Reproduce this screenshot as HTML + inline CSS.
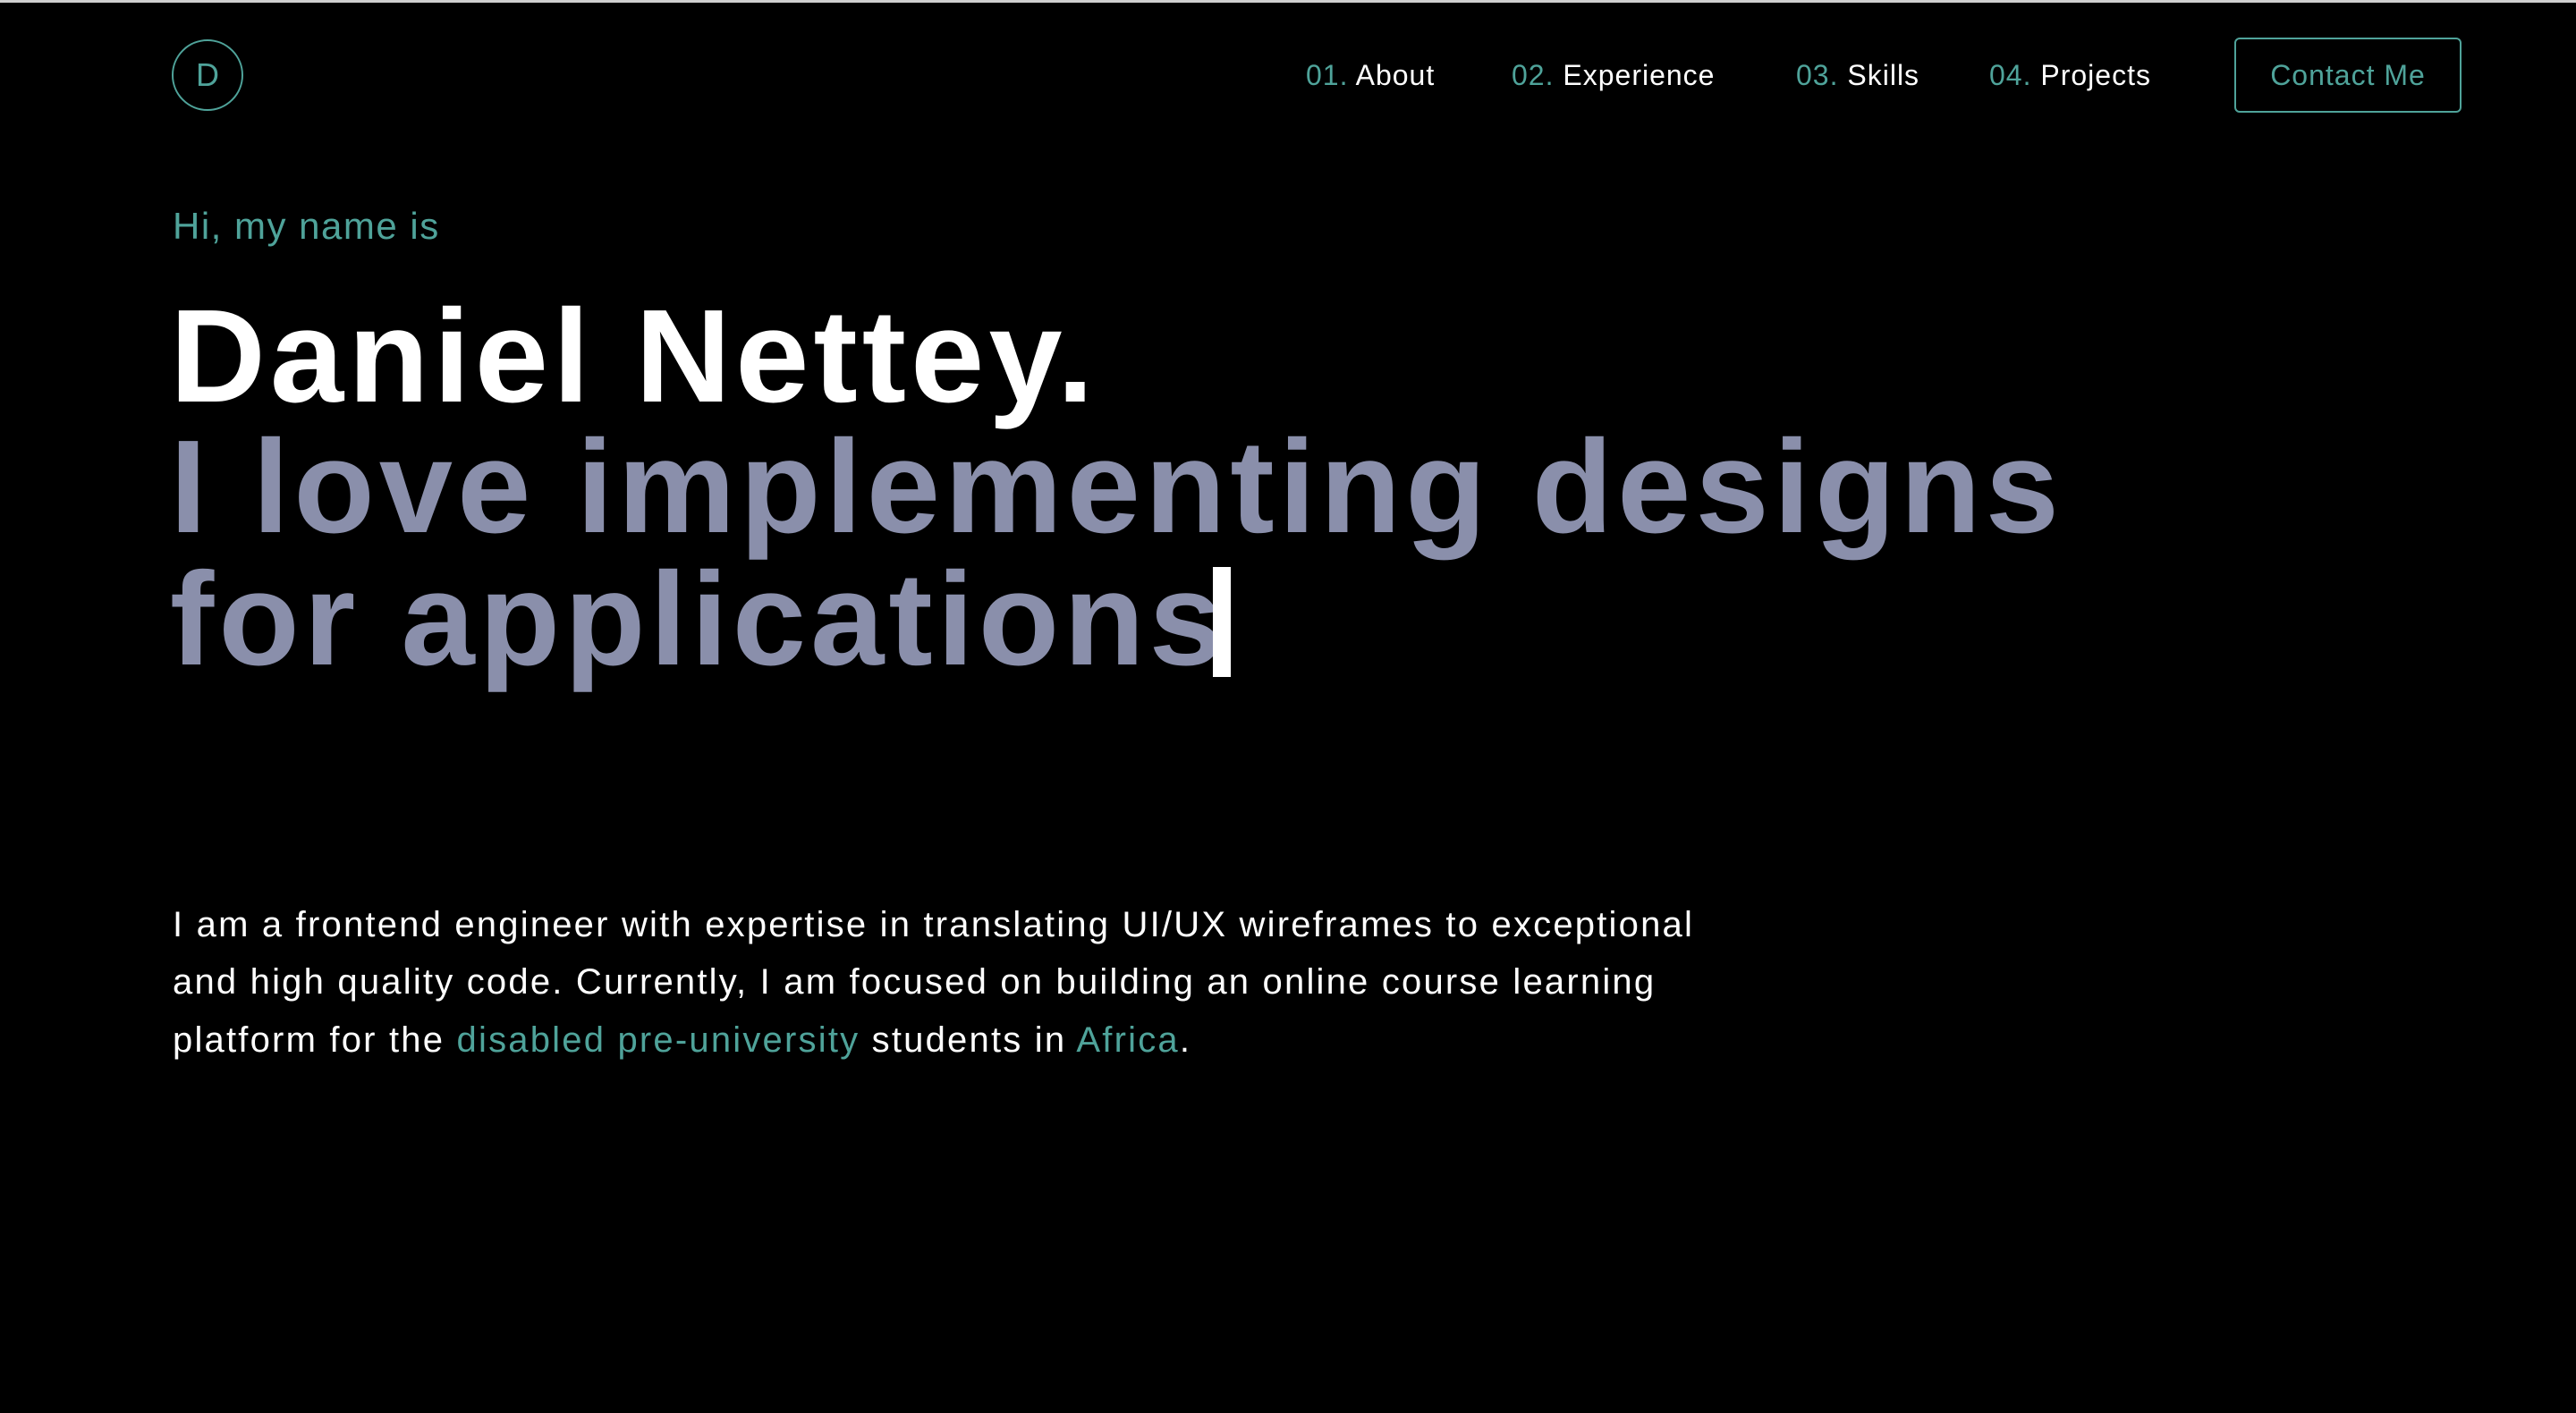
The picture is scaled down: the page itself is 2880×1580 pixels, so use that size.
<!DOCTYPE html>
<html><head><meta charset="utf-8"><style>
html,body{margin:0;padding:0;background:#000;width:2880px;height:1580px;overflow:hidden;font-family:"Liberation Sans",sans-serif;}
.top{position:absolute;left:0;top:0;width:2880px;height:3px;background:#cfcfcf}
.logo{position:absolute;left:192px;top:44px;width:76px;height:76px;border:2px solid #4fa39a;border-radius:50%;color:#4fa39a;font-size:36px;text-align:center;line-height:76px}
.nav{position:absolute;top:64px;font-size:32px;letter-spacing:1px;color:#fff;white-space:nowrap;line-height:40px}
.nav span{color:#4fa39a}
.btn{position:absolute;left:2498px;top:42px;width:250px;height:80px;border:2px solid #4fa39a;border-radius:6px;color:#4fa39a;font-size:32px;letter-spacing:1px;text-align:center;line-height:80px}
.hi{position:absolute;left:193px;top:228px;font-size:42px;letter-spacing:1.5px;color:#4fa39a;line-height:50px}
.big{position:absolute;left:190px;font-size:148px;font-weight:bold;letter-spacing:5px;white-space:nowrap;line-height:148px}
.p{position:absolute;left:193px;font-size:40px;color:#fff;white-space:nowrap;line-height:50px;letter-spacing:2.2px}
.p span{color:#4fa39a}
.cur{position:absolute;left:1356px;top:634px;width:20px;height:123px;background:#fff}
</style></head><body>
<div class="top"></div>
<div class="logo">D</div>
<div class="nav" style="left:1460px"><span>01.</span> About</div>
<div class="nav" style="left:1690px"><span>02.</span> Experience</div>
<div class="nav" style="left:2008px"><span>03.</span> Skills</div>
<div class="nav" style="left:2224px"><span>04.</span> Projects</div>
<div class="btn">Contact Me</div>
<div class="hi">Hi, my name is</div>
<div class="big" style="top:325px;color:#fff">Daniel Nettey.</div>
<div class="big" style="top:471px;color:#8a8fab">I love implementing designs</div>
<div class="big" style="top:619px;color:#8a8fab">for applications</div>
<div class="cur"></div>
<div class="p" style="top:1009px">I am a frontend engineer with expertise in translating UI/UX wireframes to exceptional</div>
<div class="p" style="top:1073px">and high quality code. Currently, I am focused on building an online course learning</div>
<div class="p" style="top:1138px">platform for the <span>disabled pre-university</span> students in <span>Africa</span>.</div>
</body></html>
